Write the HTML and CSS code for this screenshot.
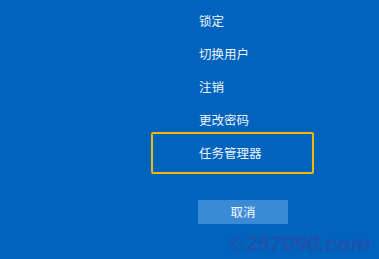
FILE: index.html
```html
<!DOCTYPE html>
<html lang="zh-CN">
<head>
<meta charset="utf-8">
<link rel="stylesheet" href="styles.css">
</head>
<body>
<div class="screen">
  <ul class="menu">
    <li class="item">锁定</li>
    <li class="item">切换用户</li>
    <li class="item">注销</li>
    <li class="item">更改密码</li>
    <li class="item focused">任务管理器</li>
  </ul>
  <div class="actions">
    <button class="cancel">取消</button>
  </div>
  <div class="watermark"><span class="logo">©</span>257090.com</div>
</div>
</body>
</html>
```
FILE: styles.css
```css
html, body {
  margin: 0;
  padding: 0;
  background: #0063be;
}
.screen {
  position: relative;
  width: 379px;
  height: 259px;
  overflow: hidden;
  background: #0063be;
  font-family: "Noto Sans CJK SC", "Noto Sans", sans-serif;
  color: #eef3fa;
}
.menu {
  list-style: none;
  margin: 0 0 0 151px;
  padding: 4px 0 0 0;
  display: flex;
  flex-direction: column;
  width: 163px;
}
.item {
  height: 33px;
  line-height: 33px;
  font-size: 12.5px;
  padding-left: 48px;
  box-sizing: border-box;
  white-space: nowrap;
}
.item.focused {
  height: 42px;
  line-height: 38px;
  margin-top: -4px;
  border: 2px solid #f4b800;
  border-radius: 2px;
  padding-left: 46px;
}
.actions {
  display: flex;
  padding: 26px 0 0 198px;
}
.cancel {
  width: 90px;
  height: 24px;
  border: none;
  background: #3a8ad6;
  color: #f4f8fd;
  font-family: "Noto Sans CJK SC", "Noto Sans", sans-serif;
  font-size: 12.5px;
  padding: 0;
  line-height: 24px;
}
.watermark {
  position: absolute;
  left: 229px;
  top: 231px;
  font-family: "Liberation Sans", Arial, sans-serif;
  font-weight: bold;
  font-style: italic;
  font-size: 22px;
  line-height: 26px;
  color: #1f52ac;
  white-space: nowrap;
}
.logo {
  font-style: normal;
  font-size: 20px;
  margin-right: 2px;
}
```
